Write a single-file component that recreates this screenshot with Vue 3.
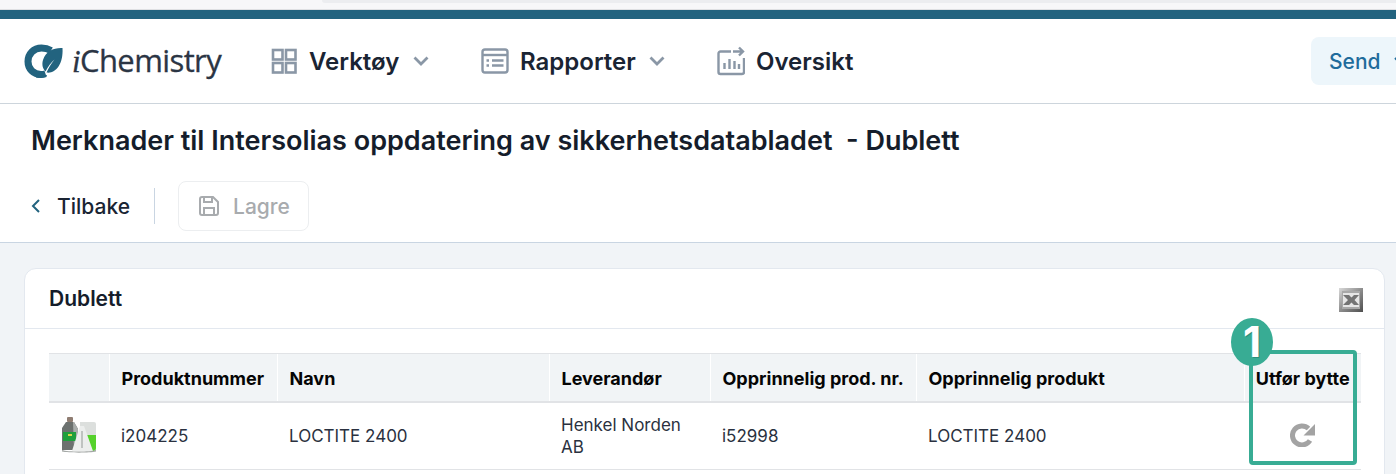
<template>
  <div class="page">
    <div class="browser-strip"><div class="strip-pill"></div></div>
    <div class="brand-bar"></div>

    <header class="nav">
      <div class="logo">
        <svg class="logo-mark" width="40" height="36" viewBox="0 0 40 36">
          <path d="M27 7.500C24.500 6 21.500 5 17.500 5 9.500 5 4 11 4 18.500S9.500 31.500 17 31.500c1.500 0 3-.2 4.500-.7" fill="none" stroke="#22637f" stroke-width="7" />
          <path d="M38.500 5C30 4.500 22 8 19 17c-1.500 5 0 9 2.500 11.500 2.500-5 5.500-9 9-12-3.500 4.500-6 8.500-8 13C31 31 39.500 22 38.500 5z" fill="#22637f" />
          <path d="M12 34c4 .8 8 .3 11-1.500" fill="none" stroke="#22637f" stroke-width="1" />
        </svg>
        <span class="logo-text"><i>i</i>Chemistry</span>
      </div>

      <a class="nav-item nav-tools">
        <svg width="26" height="26" viewBox="0 0 26 26" fill="none" stroke="#8a97a6" stroke-width="2.600">
          <rect x="2" y="2" width="9.500" height="9.500" />
          <rect x="15" y="2" width="9.500" height="9.500" />
          <rect x="2" y="15" width="9.500" height="9.500" />
          <rect x="15" y="15" width="9.500" height="9.500" />
        </svg>
        <span class="nav-label">Verktøy</span>
        <svg class="chev" width="16" height="10" viewBox="0 0 16 10" fill="none" stroke="#8a97a6" stroke-width="2.800"><path d="M1.500 1.500 8 8l6.500-6.500" /></svg>
      </a>

      <a class="nav-item nav-reports">
        <svg width="28" height="26" viewBox="0 0 28 26" fill="none" stroke="#8a97a6" stroke-width="2.400">
          <rect x="1.500" y="1.500" width="25" height="23" rx="2.500" />
          <path d="M1.500 7h25" />
          <path d="M5.500 12.500h2.500M11 12.500h11.500M5.500 17.500h2.500M11 17.500h11.500" />
        </svg>
        <span class="nav-label">Rapporter</span>
        <svg class="chev" width="16" height="10" viewBox="0 0 16 10" fill="none" stroke="#8a97a6" stroke-width="2.800"><path d="M1.500 1.500 8 8l6.500-6.500" /></svg>
      </a>

      <a class="nav-item nav-overview">
        <svg width="28" height="30" viewBox="0 0 28 30" fill="none" stroke="#8a97a6" stroke-width="2.400">
          <path d="M14 5.500H3.500a2 2 0 0 0-2 2V26a2 2 0 0 0 2 2H25a2 2 0 0 0 2-2V12" />
          <path d="M16 5.500h9.500M22 1.500l4 4-4 4" />
          <path d="M7.500 17v6M12.500 13v10M17.500 15v8M22 18v5" />
        </svg>
        <span class="nav-label">Oversikt</span>
      </a>

      <button class="send-btn">
        Send
        <svg width="14" height="9" viewBox="0 0 14 9" fill="none" stroke="#1f6c9c" stroke-width="2"><path d="M1 1l6 6 6-6" /></svg>
      </button>
    </header>

    <section class="head">
      <h1>Merknader til Intersolias oppdatering av sikkerhetsdatabladet &nbsp;- Dublett</h1>
      <div class="toolbar">
        <a class="back">
          <svg width="10" height="16" viewBox="0 0 10 16" fill="none" stroke="#22637f" stroke-width="2"><path d="M8 2 2 8l6 6" /></svg>
          Tilbake
        </a>
        <span class="divider"></span>
        <button class="save" disabled>
          <svg width="20" height="20" viewBox="0 0 20 20" fill="none" stroke="#a8abae" stroke-width="2">
            <path d="M3 1h11l5 5v11a2 2 0 0 1-2 2H3a2 2 0 0 1-2-2V3a2 2 0 0 1 2-2z" />
            <path d="M5 1v5h8V1M5 19v-7h10v7" />
          </svg>
          Lagre
        </button>
      </div>
    </section>

    <main class="content">
      <section class="card">
        <div class="card-head">
          <h2>Dublett</h2>
          <svg class="excel" width="24" height="24" viewBox="0 0 24 24">
            <defs>
              <linearGradient id="xl" x1="0" y1="0" x2="1" y2="1">
                <stop offset="0" stop-color="#d9d9d9" />
                <stop offset=".5" stop-color="#8d8d8d" />
                <stop offset="1" stop-color="#4e4e4e" />
              </linearGradient>
            </defs>
            <rect width="24" height="24" fill="url(#xl)" />
            <rect x="3" y="3" width="18" height="18" fill="#a8a8a8" />
            <rect x="4" y="5" width="16" height="14" fill="#e6e6e6" />
            <path d="M4 7h6l2.500 2.500L15 7h5l-4.500 5 4.500 5h-5l-2.500-2.500L10 17H4l5-5z" fill="#747474" />
          </svg>
        </div>

        <div class="table-wrap">
          <table>
            <colgroup>
              <col v-for="w in colWidths" :key="w.key" :style="{ width: w.px + 'px' }" />
            </colgroup>
            <thead>
              <tr>
                <th></th>
                <th>Produktnummer</th>
                <th>Navn</th>
                <th>Leverandør</th>
                <th>Opprinnelig prod. nr.</th>
                <th>Opprinnelig produkt</th>
                <th class="swap-head">Utfør bytte</th>
              </tr>
            </thead>
            <tbody>
              <tr>
                <td class="icon-cell">
                  <svg width="36" height="36" viewBox="0 0 36 36">
                    <rect x="6" y="0" width="6" height="5" rx="1" fill="#8f7d72" />
                    <path d="M5 5h8l4 7v21H1V11z" fill="#6c716f" />
                    <path d="M12 5h1l4 7v21h-4z" fill="#a9adab" />
                    <rect x="2" y="15" width="13" height="9" fill="#1f9f3c" />
                    <rect x="7" y="17" width="4" height="2" fill="#d8d84a" />
                    <path d="M19 5h14a2 2 0 0 1 2 2v24a3 3 0 0 1-3 3H19z" fill="#dcdfdd" />
                    <path d="M25 18h10v13a3 3 0 0 1-3 3h-7z" fill="#55d12b" />
                    <path d="M19 9h4l9 25H11z" fill="#eceeed" />
                    <path d="M20 14h2v17h-2z" fill="#bfc3c1" />
                    <path d="M1 33c6 2 28 2 34 0v1.500C29 36 7 36 1 34.500z" fill="#a5a9a7" />
                  </svg>
                </td>
                <td>i204225</td>
                <td>LOCTITE 2400</td>
                <td>Henkel Norden AB</td>
                <td>i52998</td>
                <td>LOCTITE 2400</td>
                <td class="swap-cell">
                  <svg width="26" height="24" viewBox="0 0 26 24" fill="none">
                    <path d="M20 17.500A9.500 9.500 0 1 1 18.500 5.500" stroke="#a3a3a3" stroke-width="5" />
                    <path d="M25 1v11.500H13.500z" fill="#a3a3a3" />
                  </svg>
                </td>
              </tr>
            </tbody>
          </table>
        </div>
      </section>
    </main>

    <div class="callout"></div>
    <div class="callout-badge">1</div>
  </div>
</template>

<script setup>
const colWidths = [
  { key: 'icon', px: 60 },
  { key: 'number', px: 168 },
  { key: 'name', px: 272 },
  { key: 'supplier', px: 161 },
  { key: 'origNumber', px: 206 },
  { key: 'origProduct', px: 328 },
  { key: 'swap', px: 117 }
]
</script>

<style>
html,
body {
  margin: 0;
  height: 100%;
  overflow: hidden;
  background: #f1f4f7;
}
</style>

<style scoped>
.page {
  position: relative;
  width: 1396px;
  height: 474px;
  overflow: hidden;
  font-family: Inter, "Liberation Sans", sans-serif;
  color: #1a2433;
}

.browser-strip {
  height: 10px;
  box-sizing: border-box;
  background: #f7f7f9;
  border-bottom: 1px solid #dfe0e3;
  padding-left: 322px;
}

.strip-pill {
  height: 3px;
  background: #ecedf0;
  border-bottom-left-radius: 4px;
}

.brand-bar {
  height: 9px;
  background: #22637f;
}

.nav {
  height: 85px;
  box-sizing: border-box;
  background: #fff;
  border-bottom: 1px solid #cdd5dc;
  display: flex;
  align-items: center;
  padding-left: 24px;
}

.logo {
  display: flex;
  align-items: center;
  width: 247px;
  gap: 8px;
}

.logo-text {
  font-family: "Open Sans", sans-serif;
  font-size: 31px;
  letter-spacing: -0.6px;
  color: #2b3544;
  line-height: 36px;
  -webkit-text-stroke: 0.3px #2b3544;
}

.logo-text i {
  font-family: "Liberation Serif", serif;
}

.nav-item {
  display: flex;
  align-items: center;
  gap: 11px;
}

.nav-label {
  font-size: 24px;
  font-weight: 600;
  color: #1a2433;
}

.chev {
  margin-left: 2px;
}

.nav-tools {
  width: 210px;
  gap: 12px;
}

.nav-reports {
  width: 236px;
}

.send-btn {
  margin-left: auto;
  flex: none;
  width: 100px;
  height: 48px;
  margin-right: -15px;
  border: 0;
  border-radius: 8px;
  background: #edf6fb;
  color: #1f6c9c;
  font: 500 21px Inter, sans-serif;
  display: flex;
  align-items: center;
  gap: 13px;
  padding: 0 0 0 18px;
}

.send-btn svg {
  flex: none;
}

.head {
  height: 139px;
  box-sizing: border-box;
  background: #fff;
  border-bottom: 1px solid #c9d5e2;
  padding: 20px 0 0 31px;
}

h1 {
  margin: 0;
  font-size: 27px;
  line-height: 34px;
  font-weight: 600;
  color: #151d2b;
}

.toolbar {
  display: flex;
  align-items: center;
  margin-top: 23px;
}

.back {
  display: flex;
  align-items: center;
  gap: 16px;
  font-size: 21px;
  font-weight: 500;
  color: #1a2433;
}

.divider {
  width: 1px;
  height: 36px;
  background: #c9d5e2;
  margin: 0 23px 0 24px;
}

.save {
  width: 131px;
  height: 50px;
  box-sizing: border-box;
  border: 1px solid #eceef0;
  border-radius: 8px;
  background: #fff;
  color: #a8abae;
  font: 500 21px Inter, sans-serif;
  display: flex;
  align-items: center;
  gap: 14px;
  padding: 0 0 0 20px;
}

.content {
  padding: 25px 11px 0 24px;
}

.card {
  background: #fff;
  border: 1px solid #e3e8ef;
  border-radius: 12px 12px 0 0;
  height: 260px;
  box-sizing: border-box;
}

.card-head {
  height: 60px;
  box-sizing: border-box;
  border-bottom: 1px solid #e3e8ef;
  padding: 0 21px 0 24px;
  display: flex;
  align-items: center;
  justify-content: space-between;
}

.excel {
  margin-top: 2px;
}

h2 {
  margin: 0;
  font-size: 21px;
  font-weight: 600;
  color: #151d2b;
}

.table-wrap {
  padding: 24px 0 0 24px;
}

table {
  width: 1312px;
  table-layout: fixed;
  border-collapse: collapse;
  font-size: 17px;
}

th {
  height: 48px;
  box-sizing: border-box;
  padding: 3px 12px 0;
  background: #f1f4f6;
  border-top: 1px solid #e1e3e6;
  border-bottom: 2px solid #e1e3e6;
  border-left: 1px solid #fff;
  text-align: left;
  font-size: 18px;
  font-weight: 700;
  color: #050505;
  white-space: nowrap;
}

th:first-child {
  border-left: 0;
}

td {
  height: 68px;
  box-sizing: border-box;
  padding: 0 12px;
  border-bottom: 1px solid #e1e3e6;
  line-height: 22px;
  color: #2a3140;
}

.icon-cell {
  padding: 4px 0 0 12px;
}

.swap-head {
  text-align: center;
  padding: 3px 0 0;
}

.swap-cell {
  text-align: center;
  padding: 4px 0 0;
}

.callout {
  position: absolute;
  left: 1249px;
  top: 350px;
  width: 108px;
  height: 115px;
  box-sizing: border-box;
  border: 4px solid #38ac94;
  border-radius: 4px;
}

.callout-badge {
  position: absolute;
  left: 1231px;
  top: 318px;
  width: 42px;
  height: 48px;
  border-radius: 50%;
  background: #38ac94;
  color: #fff;
  font: 700 42px/48px Inter, sans-serif;
  text-align: center;
  text-shadow: 1px 1px 0 #2c8e7a;
}
</style>
